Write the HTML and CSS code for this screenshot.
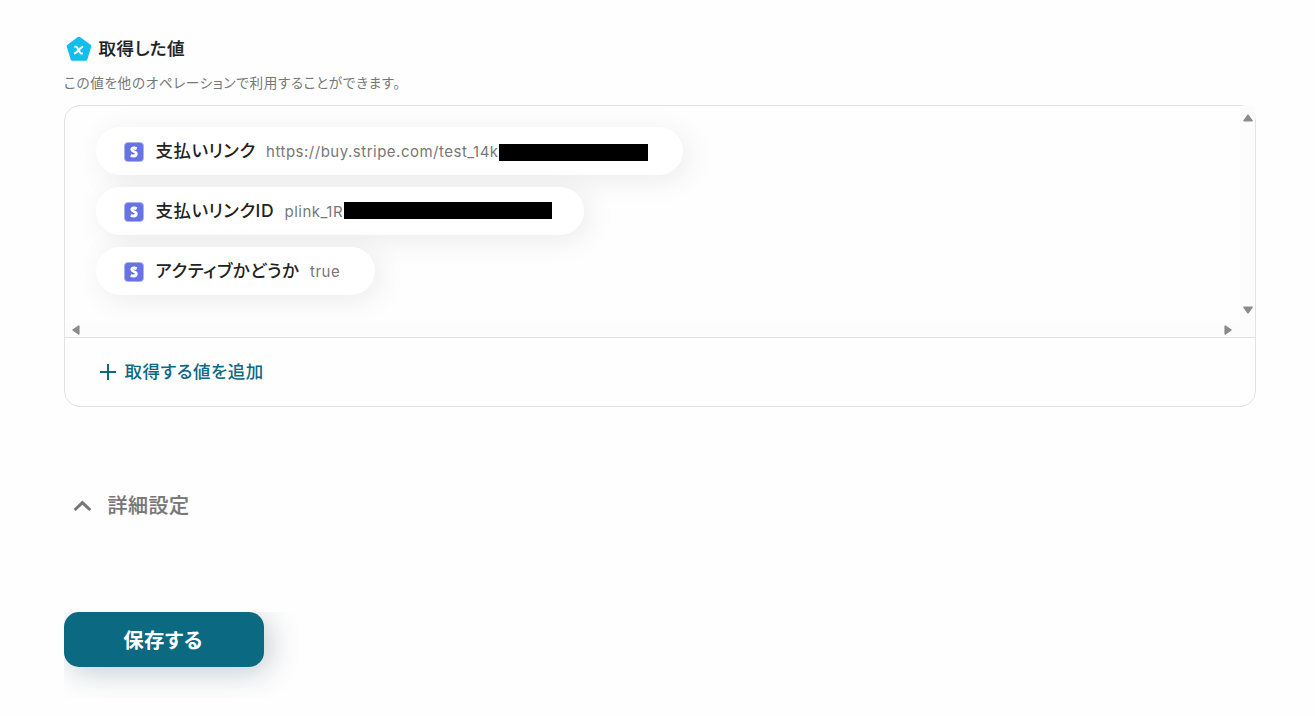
FILE: index.html
```html
<!DOCTYPE html>
<html lang="ja">
<head>
  <meta charset="UTF-8" />
  <meta name="viewport" content="width=device-width, initial-scale=1.0"/>
  <title>取得した値</title>
  <link rel="stylesheet" href="styles.css">
</head>
<body>

  <svg class="sprite" width="0" height="0">
    <symbol id="icon-s" viewBox="0 0 20 20">
      <rect x="0.5" y="0.5" width="19" height="19" rx="3.5" fill="#6772e5" stroke="#a9b0f2" stroke-width="0.8"/>
      <path d="M12.7 6.7C11.8 6.2 10.7 5.9 9.7 6C8.5 6.1 7.8 6.7 7.8 7.6C7.8 9.9 12.3 9 12.3 11.8C12.3 13.2 11.2 14 9.7 14C8.6 14 7.6 13.7 6.8 13.2" fill="none" stroke="#fff" stroke-width="2.8"/>
    </symbol>
  </svg>

  <div class="heading">
    <svg class="heading-icon" viewBox="0 0 26 26" width="26" height="26">
      <path d="M13 2.5L23.5 10.3L19.6 22.9H6.4L2.5 10.3Z" fill="#13bdee" stroke="#13bdee" stroke-width="3.6" stroke-linejoin="round"/>
      <path d="M8.5 10.7H10C12 10.7 13.2 17.4 15.2 17.4H16.9M17.2 10.7C14 10.7 11.4 17.4 8 17.4" fill="none" stroke="#fff" stroke-width="2"/>
    </svg>
    <h2>取得した値</h2>
  </div>
  <p class="description">この値を他のオペレーションで利用することができます。</p>

  <div class="panel">
    <div class="scroll-area">
      <div class="values">
        <div class="chip">
          <svg class="chip-icon"><use href="#icon-s"/></svg>
          <span class="chip-name">支払いリンク</span>
          <span class="chip-value">https://buy.stripe.com/test_14k</span>
          <span class="mask mask-url"></span>
        </div>
        <div class="chip">
          <svg class="chip-icon"><use href="#icon-s"/></svg>
          <span class="chip-name">支払いリンクID</span>
          <span class="chip-value">plink_1R</span>
          <span class="mask mask-id"></span>
        </div>
        <div class="chip">
          <svg class="chip-icon"><use href="#icon-s"/></svg>
          <span class="chip-name">アクティブかどうか</span>
          <span class="chip-value">true</span>
        </div>
      </div>
      <div class="track track-y">
        <svg viewBox="0 0 10 8" width="10" height="8"><path d="M5 1.2L8.9 6.8H1.1Z"/></svg>
        <svg viewBox="0 0 10 8" width="10" height="8"><path d="M5 6.8L8.9 1.2H1.1Z"/></svg>
      </div>
      <div class="track track-x">
        <svg viewBox="0 0 8 10" width="8" height="10"><path d="M1.2 5L6.8 1.1V8.9Z"/></svg>
        <svg viewBox="0 0 8 10" width="8" height="10"><path d="M6.8 5L1.2 1.1V8.9Z"/></svg>
      </div>
      <div class="track"></div>
    </div>
    <button class="add-button">
      <svg viewBox="0 0 18 18" width="18" height="18"><path d="M9 1V17M1 9H17"/></svg>
      <span>取得する値を追加</span>
    </button>
  </div>

  <button class="details">
    <svg viewBox="0 0 20 14" width="20" height="14"><path d="M2.6 11L10.4 3.6L18.2 11"/></svg>
    <span>詳細設定</span>
  </button>

  <div class="actions">
    <button class="save-button">保存する</button>
  </div>

</body>
</html>
```
FILE: styles.css
```css
* {
  box-sizing: border-box;
}

body {
  margin: 0;
  padding: 36px 59px 0 64px;
  font-family: Inter, "Noto Sans CJK JP", sans-serif;
  font-feature-settings: "palt";
  background: #fefefe;
  color: #222;
}

button {
  border: none;
  padding: 0;
  background: none;
  font-family: inherit;
  font-feature-settings: inherit;
  cursor: pointer;
}

.sprite {
  display: block;
}

.heading {
  display: flex;
  align-items: center;
  height: 26px;
  padding-left: 2px;
  gap: 6.5px;
}

.heading h2 {
  margin: 0;
  font-size: 17.5px;
  font-weight: 500;
  line-height: 26px;
  letter-spacing: 0.5px;
  -webkit-text-stroke: 0.2px #222;
}

.description {
  margin: 11px 0 12px;
  font-size: 13.6px;
  line-height: 20px;
  letter-spacing: 0.65px;
  color: #777;
}

.panel {
  height: 302px;
  border: 1px solid #e2e2e2;
  border-radius: 16px;
}

.scroll-area {
  display: grid;
  grid-template-columns: 1fr 15px;
  grid-template-rows: 216px 15px;
  height: 232px;
  border-bottom: 1px solid #e2e2e2;
}

.values {
  display: flex;
  flex-direction: column;
  align-items: flex-start;
  gap: 12px;
  padding: 21px 31px 0;
  border-top-left-radius: 15px;
  overflow: hidden;
}

.chip {
  display: flex;
  align-items: center;
  height: 48px;
  padding: 0 35px 0 27px;
  border-radius: 24px;
  background: #fff;
  box-shadow: 5px 5px 30px rgba(0, 0, 0, 0.08);
  white-space: nowrap;
}

.chip-icon {
  width: 20px;
  height: 20px;
  margin: 1px 12px 0 0.5px;
}

.chip-name {
  margin: 0 10.5px 3px 0;
  font-size: 17.5px;
  font-weight: 500;
  letter-spacing: 0.5px;
}

.chip-value {
  font-size: 15px;
  letter-spacing: 0.5px;
  color: #777;
}

.mask {
  height: 17px;
  background: #000;
}

.mask-url {
  width: 149px;
  margin-top: 3px;
}

.mask-id {
  width: 208px;
  margin: 0 -3px 1px 1px;
}

.track {
  display: flex;
  align-items: center;
  justify-content: space-between;
  background: #fcfcfc;
}

.track-y {
  flex-direction: column;
  padding: 8px 0;
}

.track-x {
  padding: 0 8px 0 7px;
}

.track path {
  fill: #8b8b8b;
  stroke: #8b8b8b;
  stroke-width: 1.6;
  stroke-linejoin: round;
}

.add-button {
  display: flex;
  align-items: center;
  gap: 7.5px;
  height: 68px;
  padding-left: 34px;
  font-size: 17.5px;
  font-weight: 500;
  letter-spacing: 0.5px;
  color: #0b6982;
}

.add-button span {
  margin-bottom: 3px;
}

.add-button path {
  fill: none;
  stroke: #0b6982;
  stroke-width: 2;
}

.details {
  display: flex;
  align-items: center;
  gap: 15.5px;
  height: 40px;
  margin: 79px 0 86px 8px;
  font-size: 20px;
  font-weight: 500;
  letter-spacing: 0.5px;
  color: #777;
  -webkit-text-stroke: 0.2px #777;
}

.details span {
  margin-bottom: 4px;
}

.details path {
  fill: none;
  stroke: #777;
  stroke-width: 3;
}

.actions {
  width: 234px;
  height: 86px;
  overflow: hidden;
}

.save-button {
  width: 200px;
  height: 55px;
  padding: 0 2px 2px 0;
  border-radius: 15px;
  background: #0b6982;
  box-shadow: 5px 5px 30px rgba(20, 50, 70, 0.25);
  color: #fff;
  font-size: 20.4px;
  font-weight: 700;
  letter-spacing: 0.4px;
}
```
